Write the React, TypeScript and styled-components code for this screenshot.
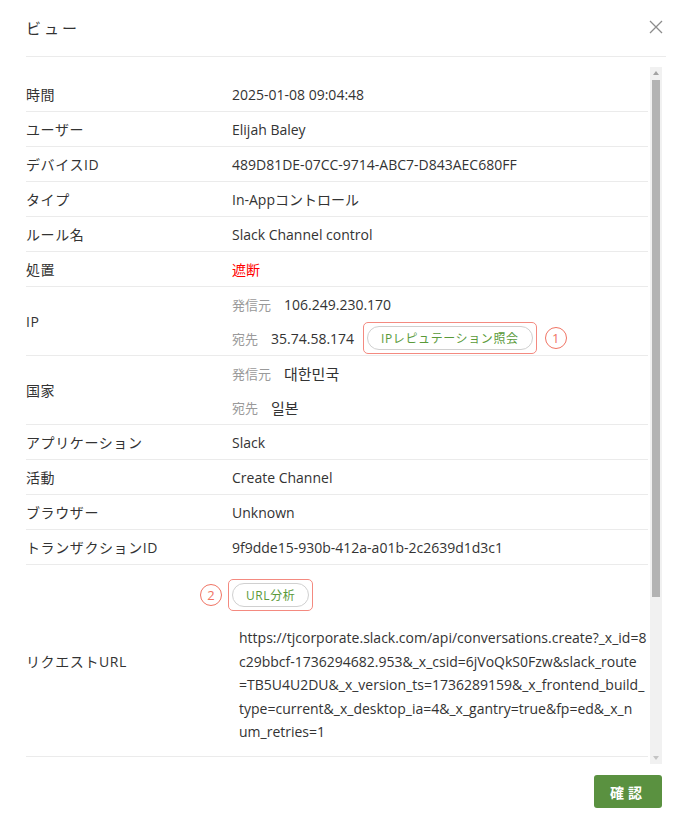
import * as React from "react";
import styled, { createGlobalStyle } from "styled-components";

const GlobalStyle = createGlobalStyle`
  html, body {
    margin: 0;
    padding: 0;
    background: #fff;
  }
  body {
    font-family: "Open Sans", "Noto Sans CJK JP", sans-serif;
    color: #333;
  }
`;

const Dialog = styled.div`
  width: 676px;
  height: 820px;
  display: flex;
  flex-direction: column;
  box-sizing: border-box;
  background: #fff;
`;

const Header = styled.div`
  height: 57px;
  margin: 0 10px 0 26px;
  display: flex;
  align-items: center;
  justify-content: space-between;
  border-bottom: 1px solid #ebebeb;
  box-sizing: border-box;
`;

const Title = styled.div`
  font-size: 15px;
  color: #333;
  letter-spacing: 3px;
  padding-bottom: 1px;
`;

const CloseButton = styled.button`
  border: none;
  background: none;
  padding: 0;
  width: 16px;
  height: 16px;
  margin-right: 2px;
  margin-bottom: 2px;
  cursor: pointer;
  display: flex;
  align-items: center;
  justify-content: center;
`;

const Body = styled.div`
  margin: 10px 14px 0 26px;
  height: 697px;
  display: flex;
  gap: 2px;
`;

const Content = styled.div`
  flex: 1;
  overflow: hidden;
  padding-top: 10px;
`;

const ScrollTrack = styled.div`
  width: 12px;
  background: #f1f1f1;
  display: flex;
  flex-direction: column;
  align-items: center;
`;

const ScrollArrow = styled.div`
  height: 12px;
  display: flex;
  align-items: center;
  justify-content: center;
`;

const ScrollThumb = styled.div`
  width: 8px;
  height: 517px;
  margin-top: 1px;
  background: #b3b3b3;
`;

const ScrollSpacer = styled.div`
  flex: 1;
`;

const Row = styled.div`
  display: grid;
  grid-template-columns: 206px 1fr;
  align-items: center;
  min-height: 35px;
  border-bottom: 1px solid #ebebeb;
  box-sizing: border-box;
  font-size: 14px;
`;

const Label = styled.div`
  color: #333;
  letter-spacing: 0.6px;
`;

const Value = styled.div<{ $danger?: boolean }>`
  color: ${(p) => (p.$danger ? "#f00" : "#333")};
`;

const SubList = styled.div`
  display: flex;
  flex-direction: column;
`;

const SubRow = styled.div`
  display: flex;
  align-items: center;
  height: 34px;
  gap: 13px;
`;

const SubLabel = styled.span`
  font-size: 13px;
  color: #9a9a9a;
`;

const SubValue = styled.span<{ $hangul?: boolean }>`
  color: #333;
  font-size: ${(p) => (p.$hangul ? "15px" : "14px")};
`;

const Highlight = styled.div`
  display: inline-flex;
  align-items: center;
  padding: 3px;
  border: 1.5px solid #f48a80;
  border-radius: 5px;
`;

const IpHighlight = styled(Highlight)`
  margin-left: -4px;
`;

const PillButton = styled.button`
  font-family: "Open Sans", "Noto Sans CJK JP", sans-serif;
  font-size: 12px;
  color: #5a9a3a;
  background: #fff;
  border: 1px solid #d0d0d0;
  border-radius: 12px;
  height: 24px;
  padding: 0 13px;
  letter-spacing: 0.6px;
  cursor: pointer;
`;

const Badge = styled.span`
  display: inline-flex;
  align-items: center;
  justify-content: center;
  width: 22px;
  height: 22px;
  border: 1.5px solid #f07464;
  border-radius: 50%;
  color: #f07464;
  font-size: 13px;
  box-sizing: border-box;
`;

const IpBadge = styled(Badge)`
  margin-left: -5px;
`;

const UrlRow = styled(Row)`
  padding: 14px 0 12px;
`;

const UrlCell = styled.div`
  display: flex;
  flex-direction: column;
  gap: 15px;
`;

const UrlActions = styled.div`
  display: flex;
  align-items: center;
  gap: 6px;
  margin-left: -32px;
`;

const UrlText = styled.div`
  padding-left: 7px;
  line-height: 23.5px;
  color: #333;
`;

const UrlLine = styled.div`
  white-space: nowrap;
`;

const Footer = styled.div`
  flex: 1;
  display: flex;
  justify-content: flex-end;
  align-items: flex-start;
  padding: 11px 14px 0 0;
`;

const PrimaryButton = styled.button`
  font-family: "Open Sans", "Noto Sans CJK JP", sans-serif;
  width: 68px;
  height: 33px;
  background: #5a9140;
  color: #fff;
  border: none;
  border-radius: 3px;
  font-size: 14px;
  font-weight: 600;
  letter-spacing: 4px;
  padding-left: 6px;
  cursor: pointer;
`;

const simpleRows: [string, string, boolean?][] = [
  ["時間", "2025-01-08 09:04:48"],
  ["ユーザー", "Elijah Baley"],
  ["デバイスID", "489D81DE-07CC-9714-ABC7-D843AEC680FF"],
  ["タイプ", "In-Appコントロール"],
  ["ルール名", "Slack Channel control"],
  ["処置", "遮断", true],
];

const lowerRows: [string, string][] = [
  ["アプリケーション", "Slack"],
  ["活動", "Create Channel"],
  ["ブラウザー", "Unknown"],
  ["トランザクションID", "9f9dde15-930b-412a-a01b-2c2639d1d3c1"],
];

// wrapped as in the original dialog
const urlLines = [
  "https://tjcorporate.slack.com/api/conversations.create?_x_id=8",
  "c29bbcf-1736294682.953&_x_csid=6jVoQkS0Fzw&slack_route",
  "=TB5U4U2DU&_x_version_ts=1736289159&_x_frontend_build_",
  "type=current&_x_desktop_ia=4&_x_gantry=true&fp=ed&_x_n",
  "um_retries=1",
];

export default function App() {
  return (
    <>
      <GlobalStyle />
      <Dialog>
        <Header>
          <Title>ビュー</Title>
          <CloseButton aria-label="close">
            <svg width="14" height="14" viewBox="0 0 14 14">
              <path d="M1 1L13 13M13 1L1 13" stroke="#8c8c8c" strokeWidth="1.3" />
            </svg>
          </CloseButton>
        </Header>
        <Body>
          <Content>
            {simpleRows.map(([label, value, danger]) => (
              <Row key={label}>
                <Label>{label}</Label>
                <Value $danger={danger}>{value}</Value>
              </Row>
            ))}
            <Row>
              <Label>IP</Label>
              <SubList>
                <SubRow>
                  <SubLabel>発信元</SubLabel>
                  <SubValue>106.249.230.170</SubValue>
                </SubRow>
                <SubRow>
                  <SubLabel>宛先</SubLabel>
                  <SubValue>35.74.58.174</SubValue>
                  <IpHighlight>
                    <PillButton>IPレピュテーション照会</PillButton>
                  </IpHighlight>
                  <IpBadge>1</IpBadge>
                </SubRow>
              </SubList>
            </Row>
            <Row>
              <Label>国家</Label>
              <SubList>
                <SubRow>
                  <SubLabel>発信元</SubLabel>
                  <SubValue $hangul>대한민국</SubValue>
                </SubRow>
                <SubRow>
                  <SubLabel>宛先</SubLabel>
                  <SubValue $hangul>일본</SubValue>
                </SubRow>
              </SubList>
            </Row>
            {lowerRows.map(([label, value]) => (
              <Row key={label}>
                <Label>{label}</Label>
                <Value>{value}</Value>
              </Row>
            ))}
            <UrlRow>
              <Label>リクエストURL</Label>
              <UrlCell>
                <UrlActions>
                  <Badge>2</Badge>
                  <Highlight>
                    <PillButton>URL分析</PillButton>
                  </Highlight>
                </UrlActions>
                <UrlText>
                  {urlLines.map((line) => (
                    <UrlLine key={line}>{line}</UrlLine>
                  ))}
                </UrlText>
              </UrlCell>
            </UrlRow>
          </Content>
          <ScrollTrack>
            <ScrollArrow>
              <svg width="6" height="4" viewBox="0 0 6 4">
                <path d="M3 0L6 4H0z" fill="#a3a3a3" />
              </svg>
            </ScrollArrow>
            <ScrollThumb />
            <ScrollSpacer />
            <ScrollArrow>
              <svg width="6" height="4" viewBox="0 0 6 4">
                <path d="M0 0H6L3 4z" fill="#c4c4c4" />
              </svg>
            </ScrollArrow>
          </ScrollTrack>
        </Body>
        <Footer>
          <PrimaryButton>確認</PrimaryButton>
        </Footer>
      </Dialog>
    </>
  );
}
